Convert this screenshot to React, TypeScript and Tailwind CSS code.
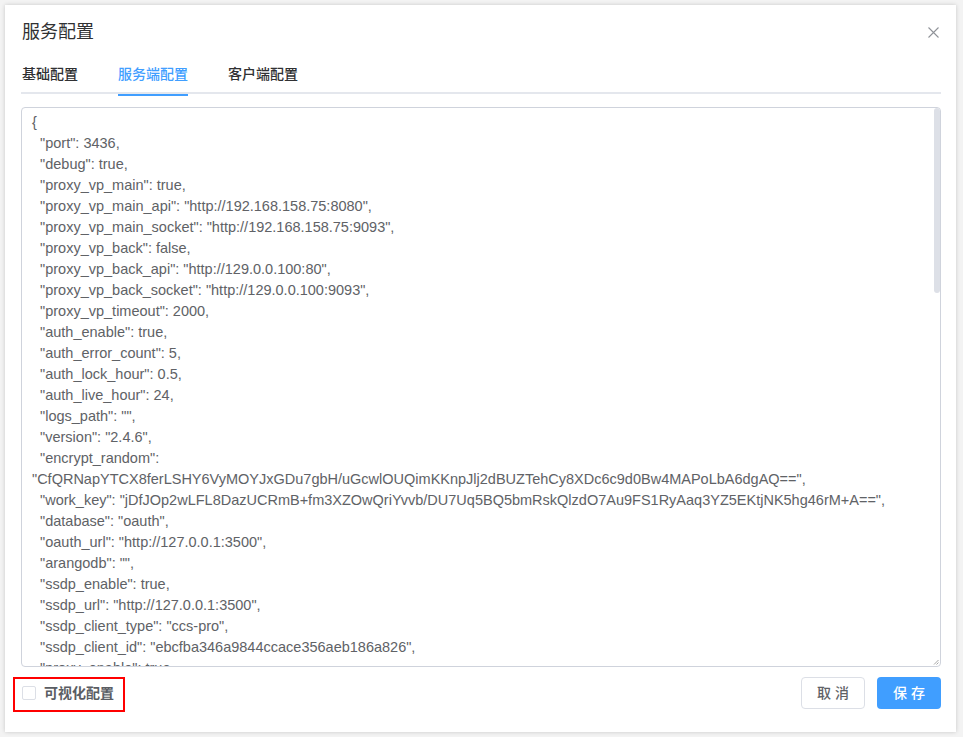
import React from "react";

const lines: string[] = [
  "{",
  '  "port": 3436,',
  '  "debug": true,',
  '  "proxy_vp_main": true,',
  '  "proxy_vp_main_api": "http://192.168.158.75:8080",',
  '  "proxy_vp_main_socket": "http://192.168.158.75:9093",',
  '  "proxy_vp_back": false,',
  '  "proxy_vp_back_api": "http://129.0.0.100:80",',
  '  "proxy_vp_back_socket": "http://129.0.0.100:9093",',
  '  "proxy_vp_timeout": 2000,',
  '  "auth_enable": true,',
  '  "auth_error_count": 5,',
  '  "auth_lock_hour": 0.5,',
  '  "auth_live_hour": 24,',
  '  "logs_path": "",',
  '  "version": "2.4.6",',
  '  "encrypt_random":',
  '"CfQRNapYTCX8ferLSHY6VyMOYJxGDu7gbH/uGcwlOUQimKKnpJlj2dBUZTehCy8XDc6c9d0Bw4MAPoLbA6dgAQ==",',
  '  "work_key": "jDfJOp2wLFL8DazUCRmB+fm3XZOwQriYvvb/DU7Uq5BQ5bmRskQlzdO7Au9FS1RyAaq3YZ5EKtjNK5hg46rM+A==",',
  '  "database": "oauth",',
  '  "oauth_url": "http://127.0.0.1:3500",',
  '  "arangodb": "",',
  '  "ssdp_enable": true,',
  '  "ssdp_url": "http://127.0.0.1:3500",',
  '  "ssdp_client_type": "ccs-pro",',
  '  "ssdp_client_id": "ebcfba346a9844ccace356aeb186a826",',
  '  "proxy_enable": true,',
  '  "proxy_url": "",',
];

export default function App() {
  return (
    <div
      className="w-[963px] h-[737px] bg-[#f3f3f3] overflow-hidden"
      style={{ fontFamily: '"Liberation Sans", "Noto Sans CJK SC", sans-serif' }}
    >
      <div className="ml-[5px] mt-[5px] w-[951px] h-[727px] bg-white shadow-[0_0_4px_rgba(0,0,0,0.18)] pl-4 pr-[15px] pt-[15px] flex flex-col">
        {/* header */}
        <div className="flex items-center justify-between h-[24px]">
          <div className="text-[18px] leading-[24px] text-[#303133] pl-[1px]">服务配置</div>
          <svg width="11" height="11" viewBox="0 0 11 11" className="mr-[2px]">
            <path d="M0.5 0.5 L10.5 10.5 M10.5 0.5 L0.5 10.5" stroke="#909399" strokeWidth="1.1" />
          </svg>
        </div>
        {/* tabs */}
        <div className="mt-[10px] flex h-[40px] border-b-2 border-[#e4e7ed]">
          <div className="h-[40px] leading-[40px] text-[14px] font-medium text-[#303133] pl-[1px] pr-[20px]">基础配置</div>
          <div className="relative h-[40px] leading-[40px] text-[14px] font-medium text-[#409eff] px-[20px]">
            服务端配置
            <div className="absolute left-[20px] right-[20px] bottom-[-2px] h-[2px] bg-[#409eff]" />
          </div>
          <div className="h-[40px] leading-[40px] text-[14px] font-medium text-[#303133] px-[20px]">客户端配置</div>
        </div>
        {/* textarea */}
        <div className="relative mt-[13px] h-[560px] border border-[#cfd3dc] rounded-[4px] overflow-hidden">
          <div className="pl-[10px] pr-[12px] pt-[4px] text-[14.5px] leading-[21px] text-[#606266] whitespace-pre">
            {lines.map((l, i) => (
              <div key={i} className="h-[21px]">
                {l}
              </div>
            ))}
          </div>
          <div className="absolute right-[0px] top-[0px] w-[6px] h-[185px] rounded-[3px] bg-[#dde0e7]" />
          <svg width="6" height="6" viewBox="0 0 6 6" className="absolute right-[1px] bottom-[1px]">
            <path d="M5.5 1 L1 5.5 M5.5 3.5 L3.5 5.5" stroke="#8f8f8f" strokeWidth="0.8" />
          </svg>
        </div>
        {/* footer */}
        <div className="mt-[10px] flex items-center justify-between h-[32px]">
          <div className="relative flex items-center pl-[1px] h-[20px]">
            <div className="w-[14px] h-[14px] border border-[#dcdfe6] rounded-[2px] bg-white" />
            <div className="ml-[8px] text-[14px] font-semibold text-[#5a5d63] leading-[20px]">可视化配置</div>
            <div className="pointer-events-none absolute left-[-8px] top-[-6px] w-[112px] h-[35px] border-[2.5px] border-[#ff0000]" />
          </div>
          <div className="flex items-center gap-[12px]">
            <div className="w-[64px] h-[32px] rounded-[4px] border border-[#dcdfe6] bg-white flex items-center justify-center text-[14px] font-medium text-[#606266] tracking-[4px] pl-[4px]">
              取消
            </div>
            <div className="w-[64px] h-[32px] rounded-[4px] bg-[#409eff] flex items-center justify-center text-[14px] font-medium text-white tracking-[4px] pl-[4px]">
              保存
            </div>
          </div>
        </div>
      </div>
    </div>
  );
}
